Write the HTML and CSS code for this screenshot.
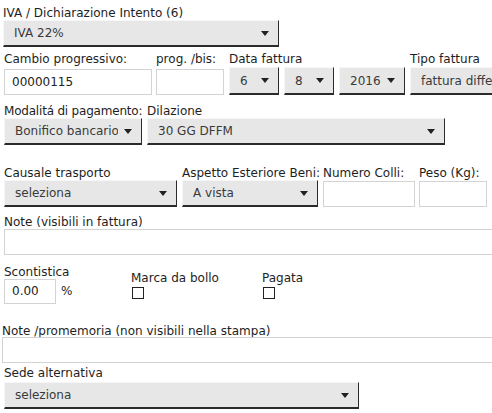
FILE: index.html
```html
<!DOCTYPE html>
<html>
<head>
<meta charset="utf-8">
<link rel="stylesheet" href="styles.css">
</head>
<body>
<div class="form">
  <div class="row r1">
    <div class="field">
      <div class="lbl">IVA / Dichiarazione Intento (6)</div>
      <div class="sel w-iva"><span class="txt">IVA 22%</span><span class="arr"></span></div>
    </div>
  </div>

  <div class="row r2">
    <div class="field w-cambio">
      <div class="lbl">Cambio progressivo:</div>
      <div class="inp">00000115</div>
    </div>
    <div class="field w-prog">
      <div class="lbl">prog. /bis:</div>
      <div class="inp"></div>
    </div>
    <div class="field">
      <div class="lbl">Data fattura</div>
      <div class="group">
        <div class="sel w-day"><span class="txt">6</span><span class="arr"></span></div>
        <div class="sel w-day"><span class="txt">8</span><span class="arr"></span></div>
        <div class="sel w-year"><span class="txt">2016</span><span class="arr"></span></div>
      </div>
    </div>
    <div class="field">
      <div class="lbl">Tipo fattura</div>
      <div class="sel w-tipo"><span class="txt">fattura differita</span><span class="arr"></span></div>
    </div>
  </div>

  <div class="row r3">
    <div class="field w-bon">
      <div class="lbl tight">Modalitá di pagamento:</div>
      <div class="sel"><span class="txt">Bonifico bancario</span><span class="arr"></span></div>
    </div>
    <div class="field w-dil">
      <div class="lbl">Dilazione</div>
      <div class="sel"><span class="txt">30 GG DFFM</span><span class="arr"></span></div>
    </div>
  </div>

  <div class="row r4">
    <div class="field w-caus">
      <div class="lbl">Causale trasporto</div>
      <div class="sel"><span class="txt">seleziona</span><span class="arr"></span></div>
    </div>
    <div class="field w-asp">
      <div class="lbl">Aspetto Esteriore Beni:</div>
      <div class="sel"><span class="txt">A vista</span><span class="arr"></span></div>
    </div>
    <div class="field w-colli">
      <div class="lbl">Numero Colli:</div>
      <div class="inp"></div>
    </div>
    <div class="field w-peso">
      <div class="lbl">Peso (Kg):</div>
      <div class="inp"></div>
    </div>
  </div>

  <div class="row r5">
    <div class="field w-full">
      <div class="lbl">Note (visibili in fattura)</div>
      <div class="inp"></div>
    </div>
  </div>

  <div class="row r6">
    <div class="field w-sconto">
      <div class="lbl">Scontistica</div>
      <div class="pct"><div class="inp w-num">0.00</div><span class="unit">%</span></div>
    </div>
    <div class="field chk-field w-marca">
      <div class="lbl">Marca da bollo</div>
      <div class="chk"></div>
    </div>
    <div class="field chk-field">
      <div class="lbl">Pagata</div>
      <div class="chk"></div>
    </div>
  </div>

  <div class="row r7">
    <div class="field w-full2">
      <div class="lbl">Note /promemoria (non visibili nella stampa)</div>
      <div class="inp"></div>
    </div>
  </div>

  <div class="row r8">
    <div class="field">
      <div class="lbl">Sede alternativa</div>
      <div class="sel w-sede"><span class="txt">seleziona</span><span class="arr"></span></div>
    </div>
  </div>
</div>
</body>
</html>
```

FILE: styles.css
```css
html, body {
  margin: 0;
  padding: 0;
  overflow: hidden;
  background: #fff;
}
body {
  font-family: "DejaVu Sans", sans-serif;
  font-size: 12px;
  color: #1e1e1e;
}
.form {
  padding: 6px 0 0 4px;
  width: 488px;
  overflow: hidden;
}
.row {
  display: flex;
  align-items: flex-start;
}
.field {
  display: flex;
  flex-direction: column;
  flex: none;
}
.lbl {
  height: 14px;
  line-height: 14px;
  white-space: nowrap;
}
.lbl.tight { letter-spacing: -0.2px; }
.sel {
  box-sizing: border-box;
  height: 27px;
  background: #e7e7e7;
  border-top: 1px solid #f6f6f6;
  border-left: 1px solid #f6f6f6;
  border-right: 1px solid #2b2b2b;
  border-bottom: 2px solid #2b2b2b;
  display: flex;
  align-items: center;
  padding: 0 10px;
  color: #3a3a3a;
  white-space: nowrap;
  overflow: hidden;
}
.sel .txt {
  flex: 1;
  overflow: hidden;
}
.arr {
  flex: none;
  width: 0;
  height: 0;
  border-left: 4px solid transparent;
  border-right: 4px solid transparent;
  border-top: 5px solid #222;
  margin-left: 6px;
  margin-right: -1px;
}
.inp {
  box-sizing: border-box;
  height: 26px;
  line-height: 24px;
  border: 1px solid #d3d3d3;
  background: #fff;
  padding: 0 7px;
  color: #222;
  white-space: nowrap;
}

/* row 1 */
.r1 .field { margin-left: -1px; }
.w-iva { width: 276px; }

/* row 2 */
.r2 { margin-top: 5px; }
.r2 .sel { margin-top: 1px; height: 28px; }
.r2 .inp { margin-top: 3px; }
.w-cambio { width: 148px; margin-right: 4px; }
.w-prog { width: 68px; margin-right: 5px; }
.group { display: flex; gap: 5px; margin-right: 5px; }
.w-day { width: 50px; }
.w-year { width: 66px; }
.w-tipo { width: 120px; }

/* row 3 */
.r3 { margin-top: 9px; }
.r3 .sel { height: 27px; }
.w-bon { width: 138px; margin-right: 5px; }
.w-dil { width: 298px; }

/* row 4 */
.r4 { margin-top: 21px; }
.r4 .inp { margin-top: 1px; }
.w-caus { width: 173px; margin-right: 5px; }
.w-asp { width: 136px; margin-right: 5px; }
.w-colli { width: 92px; margin-right: 4px; }
.w-peso { width: 68px; }

/* row 5 */
.r5 { margin-top: 8px; }
.w-full { width: 500px; }

/* row 6 */
.r6 { margin-top: 10px; }
.w-sconto { width: 127px; margin-right: 0; }
.pct { display: flex; align-items: center; }
.w-num { width: 52px; height: 25px; line-height: 23px; }
.unit { margin-left: 5px; margin-top: -2px; }
.chk-field { margin-top: 6px; }
.w-marca { width: 131px; }
.chk {
  box-sizing: border-box;
  width: 12px;
  height: 12px;
  border: 1px solid #222;
  background: #fff;
  margin-top: 2px;
  margin-left: 1px;
}

/* row 7 */
.r7 { margin-top: 20px; margin-left: -2px; }
.w-full2 { width: 500px; }
.r7 .inp { margin-top: -1px; }

/* row 8 */
.r8 { margin-top: 3px; }
.r8 .sel { margin-top: 2px; }
.w-sede { width: 355px; }
```
